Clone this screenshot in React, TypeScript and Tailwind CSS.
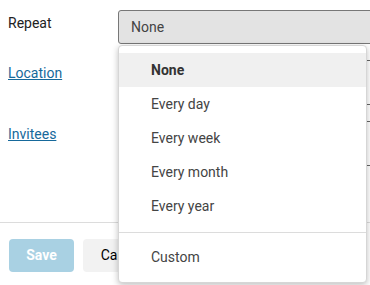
import React from "react";

export default function App() {
  const items = ["None", "Every day", "Every week", "Every month", "Every year"];
  return (
    <div className="relative w-[370px] h-[285px] overflow-hidden bg-white font-['Roboto',sans-serif] text-[14px] text-[#222]">
      <div className="pt-[10px]">
        <div className="flex">
          <div className="w-[118px] shrink-0 pl-[8px] pt-[3px] leading-[20px] text-[#222]">Repeat</div>
          <div className="w-[300px] h-[34px] shrink-0 border border-[#777] rounded-[3px] bg-[#e3e3e3] flex items-center pl-[12px] text-[#444]">
            None
          </div>
        </div>
        <div className="flex mt-[16px]">
          <div className="w-[118px] shrink-0 pl-[8px] pt-[3px] leading-[20px]">
            <a href="#" className="text-[#16699b] underline">Location</a>
          </div>
          <div className="w-[300px] h-[45px] shrink-0 border border-[#666] rounded-[3px] bg-white" />
        </div>
        <div className="flex mt-[16px]">
          <div className="w-[118px] shrink-0 pl-[8px] pt-[3px] leading-[20px]">
            <a href="#" className="text-[#16699b] underline">Invitees</a>
          </div>
          <div className="w-[300px] h-[45px] shrink-0 border border-[#666] rounded-[3px] bg-white" />
        </div>
        <div className="mt-[56px] border-t border-[#dcdcdc]" />
        <div className="flex gap-[9px] pl-[9px] pt-[16px]">
          <button className="w-[65px] h-[33px] rounded-[4px] bg-[#a9d1e3] text-white font-bold">Save</button>
          <button className="w-[78px] h-[33px] rounded-[4px] bg-[#f2f2f2] text-black">Cancel</button>
        </div>
      </div>

      <div className="absolute left-[118px] top-[45px] w-[249px] h-[238px] bg-white rounded-[4px] border border-[#d6d6d6] shadow-[0_2px_6px_rgba(0,0,0,0.25)] pt-[7px] text-[#444]">
        {items.map((t, i) => (
          <div
            key={t}
            className={
              "h-[34px] flex items-center pl-[32px] " +
              (i === 0 ? "bg-[#f0f0f0] font-bold text-[#333]" : "")
            }
          >
            {t}
          </div>
        ))}
        <div className="mt-[9px] mb-[7px] border-t border-[#dcdcdc]" />
        <div className="h-[34px] flex items-center pl-[32px]">Custom</div>
      </div>
    </div>
  );
}
